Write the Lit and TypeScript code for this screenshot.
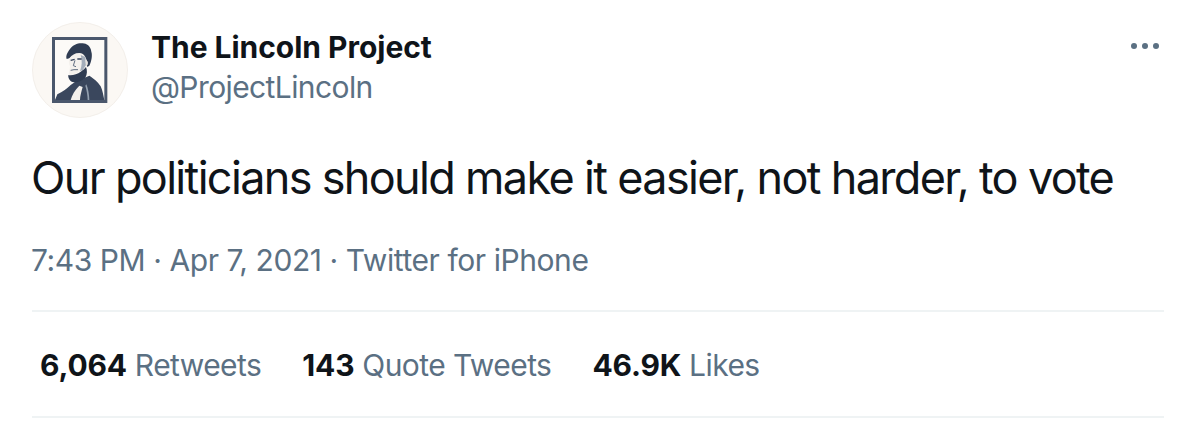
import { LitElement, html, css } from "lit";
import { customElement } from "lit/decorators.js";

@customElement("app-root")
export class AppRoot extends LitElement {
  static styles = css`
    :host { display: block; width: 1196px; height: 428px; background: #fff; overflow: hidden;
      font-family: Inter, "Liberation Sans", sans-serif; color: #0f1419; box-sizing: border-box; padding: 22px 32px 0; }
    .head { display: flex; align-items: flex-start; height: 96px; }
    .avatar { width: 96px; height: 96px; flex: none; display: block; }
    .names { margin-left: 23px; padding-top: 7px; flex: 1; }
    .name { font-size: 30px; font-weight: 700; line-height: 36px; letter-spacing: -0.03px; }
    .handle { font-size: 30px; line-height: 44px; color: #5b7083; letter-spacing: -0.6px; }
    .more { width: 32px; height: 10px; margin-top: 19px; flex: none; display: block; margin-right: 2px; }
    .text { font-size: 45px; line-height: 56px; margin-top: 32px; letter-spacing: -1.67px; white-space: nowrap; margin-left: -1px; }
    .meta { font-size: 30px; line-height: 36px; color: #5b7083; margin-top: 36px; letter-spacing: -0.43px; margin-left: -1px; }
    .stats { margin-top: 32px; height: 108px; border-top: 2px solid #eff3f4; border-bottom: 2px solid #eff3f4;
      display: flex; align-items: center; gap: 41px; padding: 2px 0 0 8px; font-size: 30px; color: #5b7083; box-sizing: border-box; letter-spacing: -0.57px; }
    b { color: #0f1419; font-weight: 700; letter-spacing: -0.15px; }
  `;
  render() {
    return html`
      <div class="head">
        <svg class="avatar" viewBox="0 0 96 96">
          <circle cx="48" cy="48" r="47.5" fill="#fbf8f4" stroke="#f3efea" stroke-width="1"/>
          <g transform="translate(18 13) scale(0.3333)">
            <rect x="6" y="6" width="166" height="198" fill="#4a576c"/>
            <rect x="15" y="15" width="148" height="180" fill="#fcfaf7"/>
            <path d="M15 195 L22 178 C38 170 52 160 62 150 L76 140 L118 122 C130 130 146 142 152 154 C158 166 160 182 163 195 Z" fill="#3a475d"/>
            <path d="M62 195 C66 180 74 166 88 152 L98 156 C94 170 90 184 90 195 Z" fill="#f3f0ec"/>
            <path d="M106 152 C110 166 113 182 113 195 L118 195 C118 178 114 160 109 148 Z" fill="#93a0af"/>
            <path d="M50 72 C46 62 54 50 60 42 C68 30 84 24 96 25 C108 24 122 32 124 50 C128 62 124 80 118 92 L112 96 L104 66 L74 60 L58 70 Z" fill="#2f3c52"/>
            <path d="M58 70 C66 60 74 54 88 54 C96 54 102 58 106 66 L113 82 C113 92 108 98 102 102 C92 110 80 114 68 120 L56 120 C57 110 60 102 60 94 C56 86 56 78 58 70 Z" fill="#f4f1ed"/>
            <path d="M92 60 L106 66 L108 90 L98 106 L90 108 C96 94 97 76 92 60 Z" fill="#a3adba"/>
            <path d="M106 74 L113 80 C114 88 112 92 108 94 Z" fill="#e8e4df"/>
            <path d="M55 120 C66 122 82 118 92 110 L102 103 L108 96 C112 106 112 118 106 128 C94 138 76 148 62 138 C56 132 54 126 55 120 Z" fill="#2f3c52"/>
            <path d="M62 76 L74 73 M82 72 L95 72" stroke="#34415a" stroke-width="4" fill="none"/>
            <path d="M75 76 L70 92 L78 95 M62 106 L72 104 L84 104" stroke="#5f6c80" stroke-width="3" fill="none"/>
          </g>
        </svg>
        <div class="names">
          <div class="name">The Lincoln Project</div>
          <div class="handle">@ProjectLincoln</div>
        </div>
        <svg class="more" viewBox="0 0 32 10">
          <circle cx="4" cy="5" r="3" fill="#5b7083"/>
          <circle cx="15" cy="5" r="3" fill="#5b7083"/>
          <circle cx="26" cy="5" r="3" fill="#5b7083"/>
        </svg>
      </div>
      <div class="text">Our politicians should make it easier, not harder, to vote</div>
      <div class="meta">7:43 PM · Apr 7, 2021 · Twitter for iPhone</div>
      <div class="stats">
        <span><b>6,064</b> Retweets</span>
        <span><b>143</b> Quote Tweets</span>
        <span><b>46.9K</b> Likes</span>
      </div>
    `;
  }
}
